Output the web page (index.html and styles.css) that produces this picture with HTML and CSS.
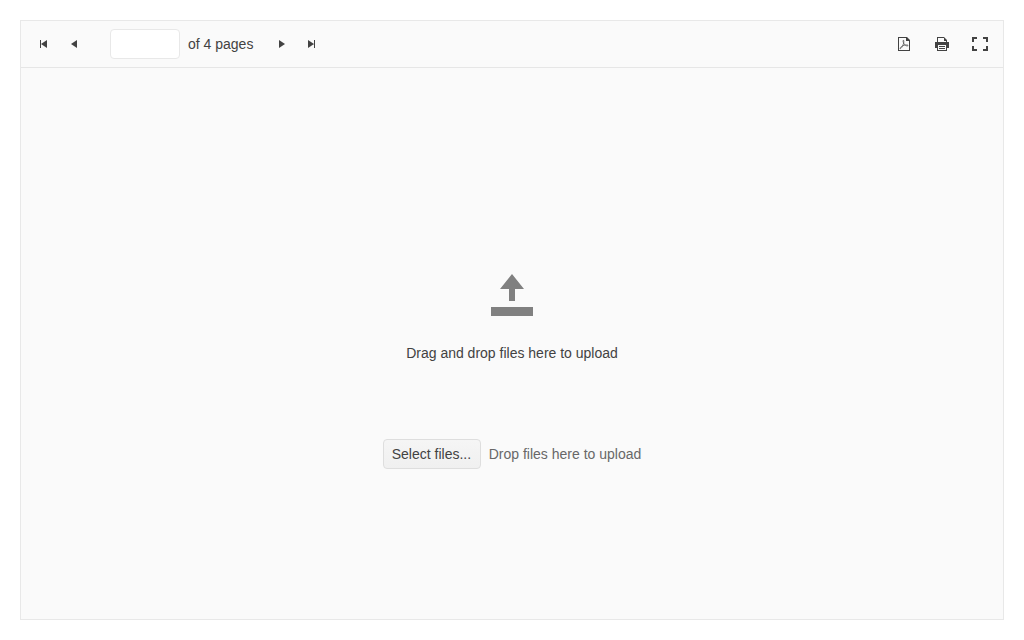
FILE: index.html
```html
<!DOCTYPE html>
<html lang="en">
<head>
<meta charset="utf-8">
<title>PDF Viewer</title>
<link rel="stylesheet" href="styles.css">
</head>
<body>
<main class="viewer">
  <div class="toolbar">
    <div class="pager">
      <button class="icon-button" aria-label="First page"><svg class="icon" viewBox="0 0 16 16"><path d="M4 4h1v8H4zM11 4v8L5 8z"/></svg></button>
      <button class="icon-button" aria-label="Previous page"><svg class="icon" viewBox="0 0 16 16"><path d="M11 4v8L5 8z"/></svg></button>
      <input class="page-input" type="text" aria-label="Page">
      <span class="page-count">of 4 pages</span>
      <button class="icon-button" aria-label="Next page"><svg class="icon" viewBox="0 0 16 16"><path d="M5 4v8l6-4z"/></svg></button>
      <button class="icon-button" aria-label="Last page"><svg class="icon" viewBox="0 0 16 16"><path d="M4 4v8l6-4zM10 4h1v8h-1z"/></svg></button>
    </div>
    <div class="actions">
      <button class="icon-button" aria-label="Open"><svg class="icon" viewBox="0 0 16 16"><path fill-rule="evenodd" d="M2 1h9l3 3v11H2zM3 2v12h10V5h-3V2z"/><path class="mark" d="M7.300 4.200c-.8 1 .4 3.100 1.200 4.200s2.500 2 3.500 1.300-2.200-1.100-4-.4-3.900 2-4 3 1.400 0 2.200-1.700S8 7 7.800 5.500s-.2-1.300-.5-1.300"/></svg></button>
      <button class="icon-button" aria-label="Print"><svg class="icon" viewBox="0 0 16 16"><path fill-rule="evenodd" d="M3 1h7l3 3v2h2v6h-2v3H3v-3H1V6h2zM4 2v4h8V5h-2V2zM4 9v5h8V9z"/><path d="M5 10h6v1H5zM5 12h6v1H5z"/></svg></button>
      <button class="icon-button" aria-label="Full screen"><svg class="icon" viewBox="0 0 16 16"><path d="M0 1h5v2H2v3H0zM11 1h5v5h-2V3h-3zM0 10h2v3h3v2H0zM14 10h2v5h-5v-2h3z"/></svg></button>
    </div>
  </div>
  <section class="canvas">
    <svg class="upload-icon" viewBox="0 0 48 48"><path d="M24 3l12 15h-9v12h-6V18h-9zM3 36h42v9H3z"/></svg>
    <p class="drag-hint">Drag and drop files here to upload</p>
    <div class="upload">
      <button class="select-button">Select files...</button>
      <span class="drop-hint">Drop files here to upload</span>
    </div>
  </section>
</main>
</body>
</html>
```
FILE: styles.css
```css
* {
  box-sizing: border-box;
}

body {
  margin: 0;
  padding: 20px;
  background: #fff;
  color: #424242;
  font: 14px/20px "Liberation Sans", Arial, sans-serif;
}

button,
input {
  font: inherit;
  color: inherit;
}

.viewer {
  display: flex;
  flex-direction: column;
  height: 600px;
  border: 1px solid #e8e8e8;
  background: #fafafa;
}

.toolbar {
  display: flex;
  align-items: center;
  justify-content: space-between;
  height: 47px;
  padding: 0 8px;
  border-bottom: 1px solid #e6e6e6;
}

.pager,
.actions {
  display: flex;
  align-items: center;
}

.actions {
  gap: 8px;
}

.icon-button {
  display: flex;
  align-items: center;
  justify-content: center;
  width: 30px;
  height: 30px;
  padding: 0;
  border: 0;
  background: none;
}

.icon {
  display: block;
  width: 16px;
  height: 16px;
  fill: #424242;
}

.icon .mark {
  fill: none;
  stroke: #424242;
  stroke-width: 0.7;
}

.page-input {
  width: 70px;
  height: 30px;
  margin: 0 8px 0 21px;
  padding: 4px 8px;
  border: 1px solid #e8e8e8;
  border-radius: 4px;
  background: #fff;
}

.page-count {
  width: 79px;
}

.canvas {
  display: flex;
  flex: 1;
  flex-direction: column;
  align-items: center;
  padding-top: 203px;
}

.upload-icon {
  width: 48px;
  height: 48px;
  fill: #808080;
}

.drag-hint {
  margin: 24px 0 76px;
}

.upload {
  display: flex;
  align-items: center;
  gap: 8px;
}

.select-button {
  width: 98px;
  height: 30px;
  padding: 4px 8px;
  border: 1px solid #dedede;
  border-radius: 4px;
  background: linear-gradient(#f5f5f5, #f0f0f0);
  text-align: left;
}

.drop-hint {
  color: #686868;
}
```
